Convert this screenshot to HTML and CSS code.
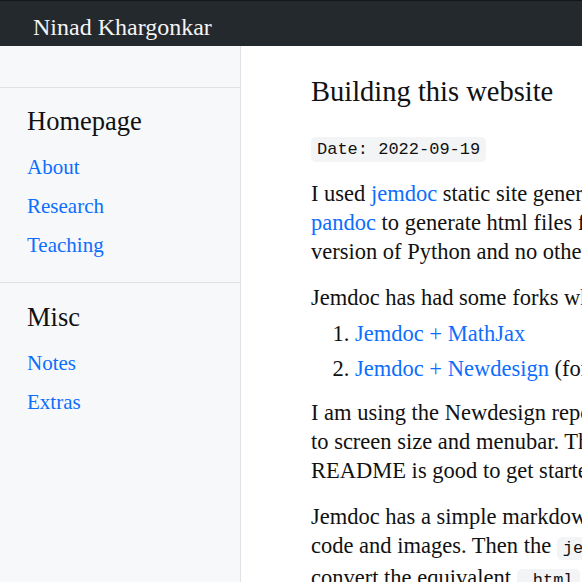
FILE: index.html
```html
<!DOCTYPE html>
<html lang="en">
<head>
<meta charset="utf-8">
<title>Building this website</title>
<link rel="stylesheet" href="styles.css">
</head>
<body>
<header class="topbar">
  <a class="brand" href="#">Ninad Khargonkar</a>
</header>
<div class="layout">
  <nav class="sidebar">
    <div class="side-top"></div>
    <section class="side-section">
      <h3 class="side-title">Homepage</h3>
      <a class="side-link" href="#">About</a>
      <a class="side-link" href="#">Research</a>
      <a class="side-link" href="#">Teaching</a>
    </section>
    <section class="side-section">
      <h3 class="side-title">Misc</h3>
      <a class="side-link" href="#">Notes</a>
      <a class="side-link" href="#">Extras</a>
    </section>
  </nav>
  <main class="content">
    <h1 class="page-title">Building this website</h1>
    <p class="date"><code class="date-code">Date: 2022-09-19</code></p>
    <p>I used <a href="#">jemdoc</a> static site generator for building this website along with<br><a href="#">pandoc</a> to generate html files for the notes. Jemdoc needs only a recent<br>version of Python and no other dependencies to build the whole site.</p>
    <p class="lead-in">Jemdoc has had some forks which add new features:</p>
    <ol class="forks">
      <li><a href="#">Jemdoc + MathJax</a></li>
      <li><a href="#">Jemdoc + Newdesign</a> (forked from the MathJax version)</li>
    </ol>
    <p>I am using the Newdesign repository since it has a nicer layout that adapts<br>to screen size and menubar. The configuration is straightforward and the<br>README is good to get started with a new site.</p>
    <p>Jemdoc has a simple markdown-like syntax for writing pages with equations,<br>code and images. Then the <code>jemdoc.py</code> script is run on each file to<br>convert the equivalent <code>.html</code> files from the source text files.</p>
  </main>
</div>
</body>
</html>
```
FILE: styles.css
```css
html, body {
  margin: 0;
  padding: 0;
  overflow: hidden;
}
body {
  font-family: "Liberation Serif", serif;
  color: #212529;
  background: #ffffff;
}
a {
  color: #0d6efd;
  text-decoration: none;
}
.topbar {
  height: 45px;
  background: #24292e;
  border-top: 1px solid #15181b;
  display: flex;
  align-items: center;
  padding-left: 33px;
}
.brand {
  color: #f4f4f4;
  font-size: 24px;
  padding-top: 7px;
}
.layout {
  display: flex;
  min-height: 600px;
}
.sidebar {
  flex: 0 0 240px;
  background: #f6f8fa;
  border-right: 1px solid #dee2e6;
}
.side-top {
  height: 41px;
}
.side-section {
  border-top: 1px solid #dee2e6;
  padding: 18px 27px 17px;
  display: flex;
  flex-direction: column;
}
.side-section + .side-section {
  padding-top: 19px;
}
.side-title {
  margin: 0 0 11px;
  font-weight: normal;
  font-size: 26.5px;
  color: #111;
}
.side-link {
  font-size: 21px;
  line-height: 39px;
}
.content {
  flex: 0 0 900px;
  padding-left: 70px;
  font-size: 22.5px;
  line-height: 29px;
  color: #111;
}
.page-title {
  font-weight: normal;
  font-size: 28.5px;
  margin: 31px 0 26px;
}
.content p {
  margin: 0 0 17px;
}
.content p.lead-in {
  margin-bottom: 4px;
}
.content p.date {
  margin-bottom: 15px;
}
.date-code {
  font-family: "Liberation Mono", monospace;
  font-size: 17px;
  background: #f3f4f6;
  border-radius: 5px;
  padding: 3px 6px;
}
code {
  font-family: "Liberation Mono", monospace;
  font-size: 17px;
  background: #f3f4f6;
  border-radius: 5px;
  padding: 2px 6px;
}
.forks {
  margin: 0 0 12px;
  padding-left: 44px;
}
.forks li {
  line-height: 35px;
}
```
